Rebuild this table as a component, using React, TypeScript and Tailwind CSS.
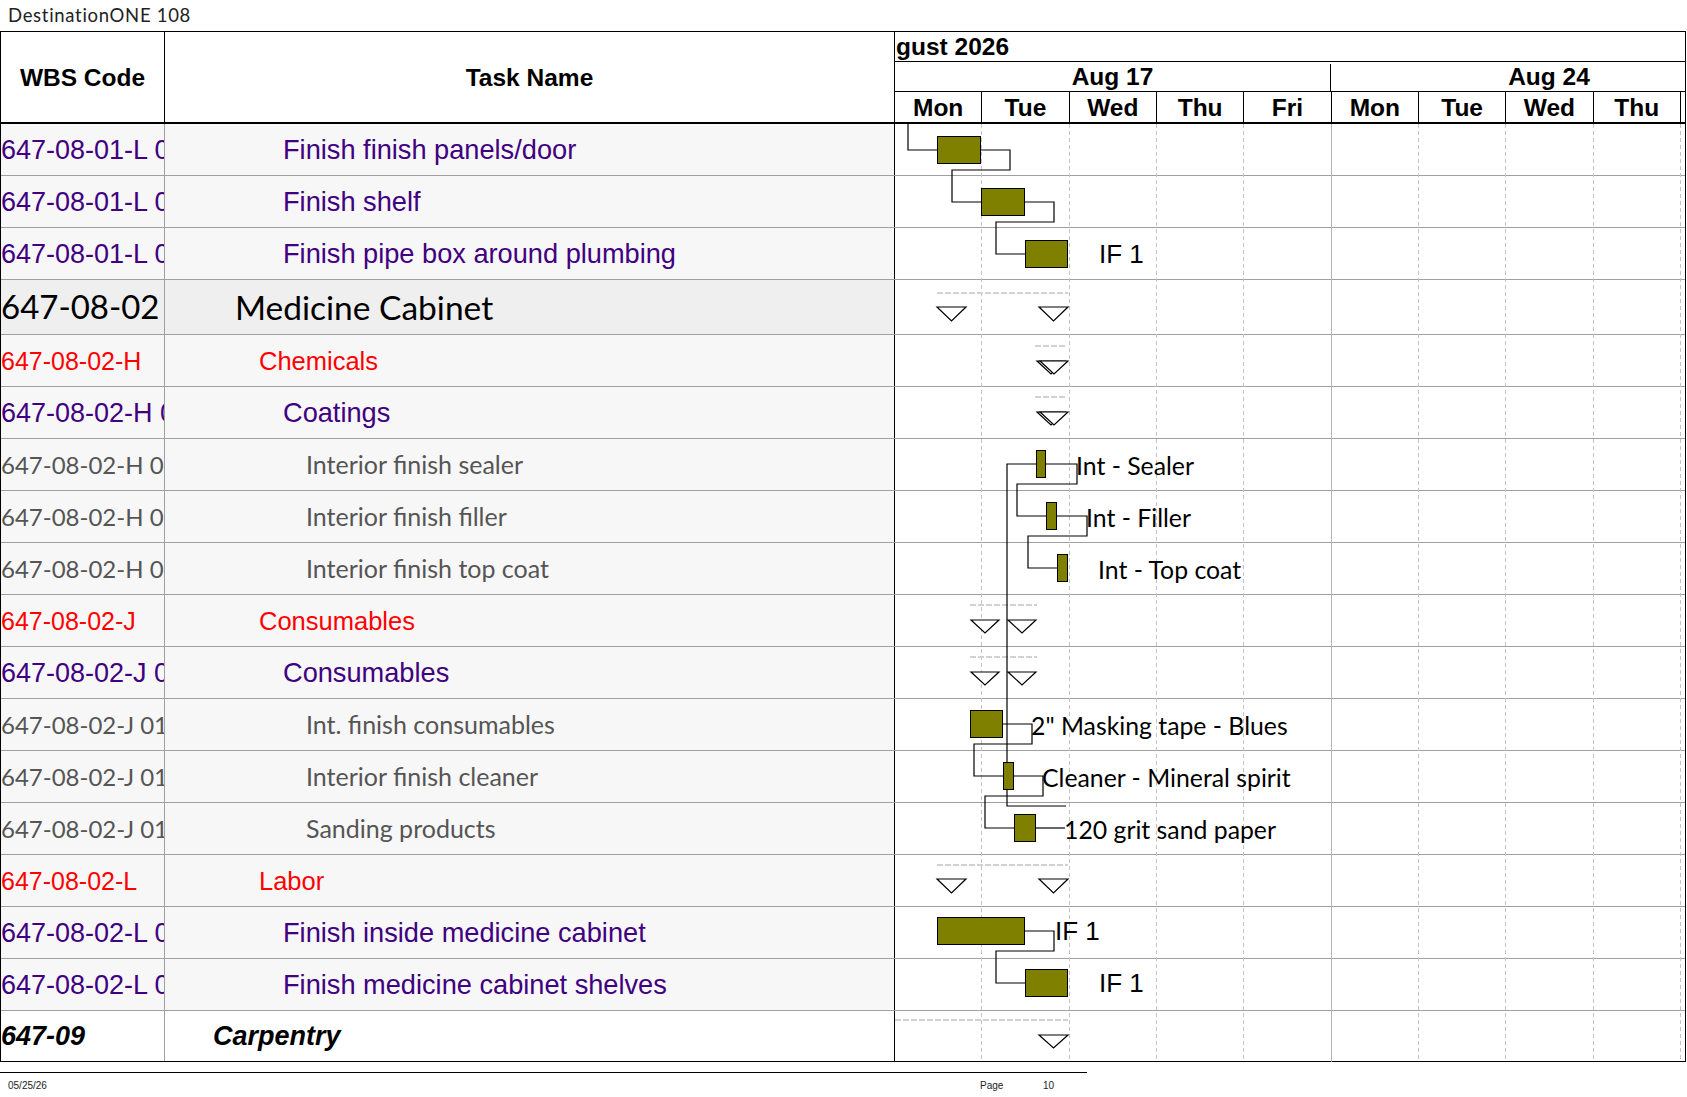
const ARIAL = "font-['Liberation_Sans',Arial,sans-serif]"
const LATO = "font-['Lato','Open_Sans',sans-serif]"

type Kind = "task" | "cat" | "item" | "group" | "section"

const rows: { code: string; task: string; kind: Kind }[] = [
  { code: "647-08-01-L 01", task: "Finish finish panels/door", kind: "task" },
  { code: "647-08-01-L 01", task: "Finish shelf", kind: "task" },
  { code: "647-08-01-L 01", task: "Finish pipe box around plumbing", kind: "task" },
  { code: "647-08-02", task: "Medicine Cabinet", kind: "group" },
  { code: "647-08-02-H", task: "Chemicals", kind: "cat" },
  { code: "647-08-02-H 01", task: "Coatings", kind: "task" },
  { code: "647-08-02-H 01 01", task: "Interior finish sealer", kind: "item" },
  { code: "647-08-02-H 01 02", task: "Interior finish filler", kind: "item" },
  { code: "647-08-02-H 01 03", task: "Interior finish top coat", kind: "item" },
  { code: "647-08-02-J", task: "Consumables", kind: "cat" },
  { code: "647-08-02-J 01", task: "Consumables", kind: "task" },
  { code: "647-08-02-J 01 01", task: "Int. finish consumables", kind: "item" },
  { code: "647-08-02-J 01 02", task: "Interior finish cleaner", kind: "item" },
  { code: "647-08-02-J 01 03", task: "Sanding products", kind: "item" },
  { code: "647-08-02-L", task: "Labor", kind: "cat" },
  { code: "647-08-02-L 01", task: "Finish inside medicine cabinet", kind: "task" },
  { code: "647-08-02-L 01", task: "Finish medicine cabinet shelves", kind: "task" },
  { code: "647-09", task: "Carpentry", kind: "section" },
]

const styles: Record<Kind, { code: string; name: string; bg: string }> = {
  task: {
    code: `${ARIAL} text-[27px] text-[#400080] pt-[2px]`,
    name: `${ARIAL} text-[27.2px] text-[#400080] pl-[118px] pt-[2px]`,
    bg: "bg-[#f7f7f7]",
  },
  cat: {
    code: `${ARIAL} text-[25px] text-[#ff0000] pt-[2px]`,
    name: `${ARIAL} text-[25.5px] text-[#ff0000] pl-[94px] pt-[2px]`,
    bg: "bg-[#f7f7f7]",
  },
  item: {
    code: `${LATO} text-[24px] text-[#555555]`,
    name: `${LATO} text-[25px] text-[#555555] pl-[141px]`,
    bg: "bg-[#f7f7f7]",
  },
  group: {
    code: `${LATO} text-[33px] text-black`,
    name: `${LATO} text-[33.5px] text-black pl-[70px]`,
    bg: "bg-[#efefef]",
  },
  section: {
    code: `${ARIAL} text-[27px] font-bold italic text-black`,
    name: `${ARIAL} text-[27px] font-bold italic text-black pl-[48px]`,
    bg: "bg-white",
  },
}

const days = ["Mon", "Tue", "Wed", "Thu", "Fri", "Mon", "Tue", "Wed", "Thu"]

// gantt drawing, page coordinates (viewBox starts at x 895, y 124)
const DAY = 87.33
const gridLines = Array.from({ length: 9 }, (_, i) => Math.round(895 + DAY * (i + 1)) - 0.5)

const bars = [
  [937, 981, 150],
  [981, 1025, 202],
  [1025, 1068, 254],
  [1036, 1046, 464],
  [1046, 1057, 516],
  [1057, 1068, 568],
  [970, 1003, 724],
  [1003, 1014, 776],
  [1014, 1036, 828],
  [937, 1025, 931],
  [1025, 1068, 983],
]

const links = [
  "908,124 908,150 937,150",
  "981,150 1010,150 1010,170 952,170 952,202 981,202",
  "1025,202 1054,202 1054,222 996,222 996,254 1025,254",
  "1036,464 1007,464 1007,806 1066,806",
  "1046,464 1077,464 1077,484 1017,484 1017,516 1046,516",
  "1057,516 1087,516 1087,536 1028,536 1028,568 1057,568",
  "1003,724 1032,724 1032,744 974,744 974,776 1003,776",
  "1014,776 1043,776 1043,796 985,796 985,828 1014,828",
  "1036,828 1065,828",
  "1025,931 1054,931 1054,951 996,951 996,983 1025,983",
]

const labels: { x: number; y: number; text: string; arial?: boolean; size?: string }[] = [
  { x: 1099, y: 254, text: "IF 1", arial: true },
  { x: 1076, y: 465, text: "Int - Sealer" },
  { x: 1086, y: 517, text: "Int - Filler" },
  { x: 1098, y: 569, text: "Int - Top coat" },
  { x: 1031, y: 725, text: "2\" Masking tape - Blues" },
  { x: 1042, y: 777, text: "Cleaner - Mineral spirit" },
  { x: 1064, y: 829, text: "120 grit sand paper" },
  { x: 1055, y: 931, text: "IF 1", arial: true },
  { x: 1099, y: 983, text: "IF 1", arial: true },
]

const summaries: { y: number; x1: number; x2: number; tris: number[]; w: number; top: number; h: number }[] = [
  { y: 293, x1: 937, x2: 1068, tris: [937, 1039], w: 29, top: 307, h: 14 },
  { y: 346, x1: 1035, x2: 1065, tris: [1037, 1040], w: 28, top: 361, h: 13 },
  { y: 397, x1: 1035, x2: 1065, tris: [1037, 1040], w: 28, top: 412, h: 13 },
  { y: 605, x1: 970, x2: 1037, tris: [971, 1008], w: 28, top: 620, h: 13 },
  { y: 657, x1: 970, x2: 1037, tris: [971, 1008], w: 28, top: 672, h: 13 },
  { y: 865, x1: 937, x2: 1068, tris: [937, 1039], w: 29, top: 879, h: 14 },
  { y: 1020, x1: 895, x2: 1068, tris: [1039], w: 29, top: 1035, h: 13 },
]

function GanttDrawing() {
  return (
    <svg
      className="absolute left-[894px] top-0 pointer-events-none"
      width={790}
      height={938}
      viewBox="895 124 790 938"
    >
      {gridLines.map((x, i) =>
        i === 4 ? (
          <line key={x} x1={x} y1={124} x2={x} y2={1062} stroke="#b4b4b4" strokeWidth={1} />
        ) : (
          <line key={x} x1={x} y1={124} x2={x} y2={1062} stroke="#c4c4c4" strokeWidth={1} strokeDasharray="4 3" />
        )
      )}

      {summaries.map((s) => (
        <g key={s.y}>
          <line x1={s.x1} y1={s.y} x2={s.x2} y2={s.y} stroke="#d2d2d2" strokeWidth={2} strokeDasharray="6 2" />
          {s.tris.map((x) => (
            <polygon
              key={x}
              points={`${x},${s.top} ${x + s.w},${s.top} ${x + s.w / 2},${s.top + s.h}`}
              fill="white"
              stroke="black"
              strokeWidth={1.2}
            />
          ))}
        </g>
      ))}

      {links.map((p) => (
        <polyline key={p} points={p} fill="none" stroke="black" strokeWidth={1.2} />
      ))}

      {bars.map(([x1, x2, c]) => (
        <rect key={`${x1}-${c}`} x={x1 + 0.5} y={c - 13.5} width={x2 - x1 - 1} height={27} fill="#808000" stroke="black" strokeWidth={1} />
      ))}

      {labels.map((l) => (
        <text
          key={`${l.text}-${l.y}`}
          x={l.x}
          y={l.y}
          dominantBaseline="central"
          className={l.arial ? `${ARIAL} text-[26px]` : `${LATO} text-[24.8px]`}
          fill="black"
        >
          {l.text}
        </text>
      ))}
    </svg>
  )
}

export default function App() {
  return (
    <div className="w-[1687px] h-[1097px] bg-white text-black overflow-hidden">
      <div className={`h-[31px] pl-[8px] flex items-center text-[18.5px] tracking-[0.7px] text-[#222] ${LATO}`}>
        DestinationONE 108
      </div>

      <div className="w-[1686px] border border-black">
        {/* header */}
        <div className="flex h-[92px] border-b-2 border-black">
          <div className={`w-[163px] pt-[3px] flex items-center justify-center font-bold text-[24.5px] ${ARIAL}`}>WBS Code</div>
          <div className={`w-[730px] pt-[3px] border-l border-black flex items-center justify-center font-bold text-[24.5px] ${ARIAL}`}>
            Task Name
          </div>
          <div className={`flex-1 border-l border-black flex flex-col overflow-hidden font-bold text-[24.5px] ${ARIAL}`}>
            <div className="h-[30px] pt-[2px] border-b border-black flex items-center pl-[1px] leading-none whitespace-nowrap">gust 2026</div>
            <div className="h-[30px] pt-[2px] border-b border-black flex">
              <div className="w-[436px] shrink-0 border-r border-black flex items-center justify-center leading-none">Aug 17</div>
              <div className="flex-1 overflow-hidden flex items-center">
                <div className="w-[436px] shrink-0 text-center leading-none">Aug 24</div>
              </div>
            </div>
            <div className="flex-1 flex">
              {days.map((d, i) => (
                <div key={i} className="w-[87.33px] shrink-0 pt-[3px] border-r border-black flex items-center justify-center leading-none">
                  {d}
                </div>
              ))}
              <div className="flex-1" />
            </div>
          </div>
        </div>

        {/* body */}
        <div className="relative">
          {rows.map((r, i) => {
            const s = styles[r.kind]
            const last = i === rows.length - 1
            const h = r.kind === "group" ? "h-[55px]" : last ? "h-[50px]" : "h-[52px]"
            return (
              <div key={i} className={`flex ${h} ${last ? "" : "border-b border-[#a0a0a0]"}`}>
                <div className={`w-[163px] shrink-0 overflow-hidden whitespace-nowrap flex items-center ${s.bg} ${s.code}`}>
                  {r.code}
                </div>
                <div className={`w-[730px] shrink-0 border-l border-[#a0a0a0] overflow-hidden whitespace-nowrap flex items-center ${s.bg} ${s.name}`}>
                  {r.task}
                </div>
                <div className="flex-1 border-l border-black bg-white" />
              </div>
            )
          })}
          <GanttDrawing />
        </div>
      </div>

      {/* footer */}
      <div className="mt-[10px] w-[1087px] h-px bg-black" />
      <div className={`flex pl-[8px] mt-[8px] text-[10px] leading-none text-[#222] ${ARIAL}`}>
        <span className="w-[972px]">05/25/26</span>
        <span className="w-[63px]">Page</span>
        <span>10</span>
      </div>
    </div>
  )
}
